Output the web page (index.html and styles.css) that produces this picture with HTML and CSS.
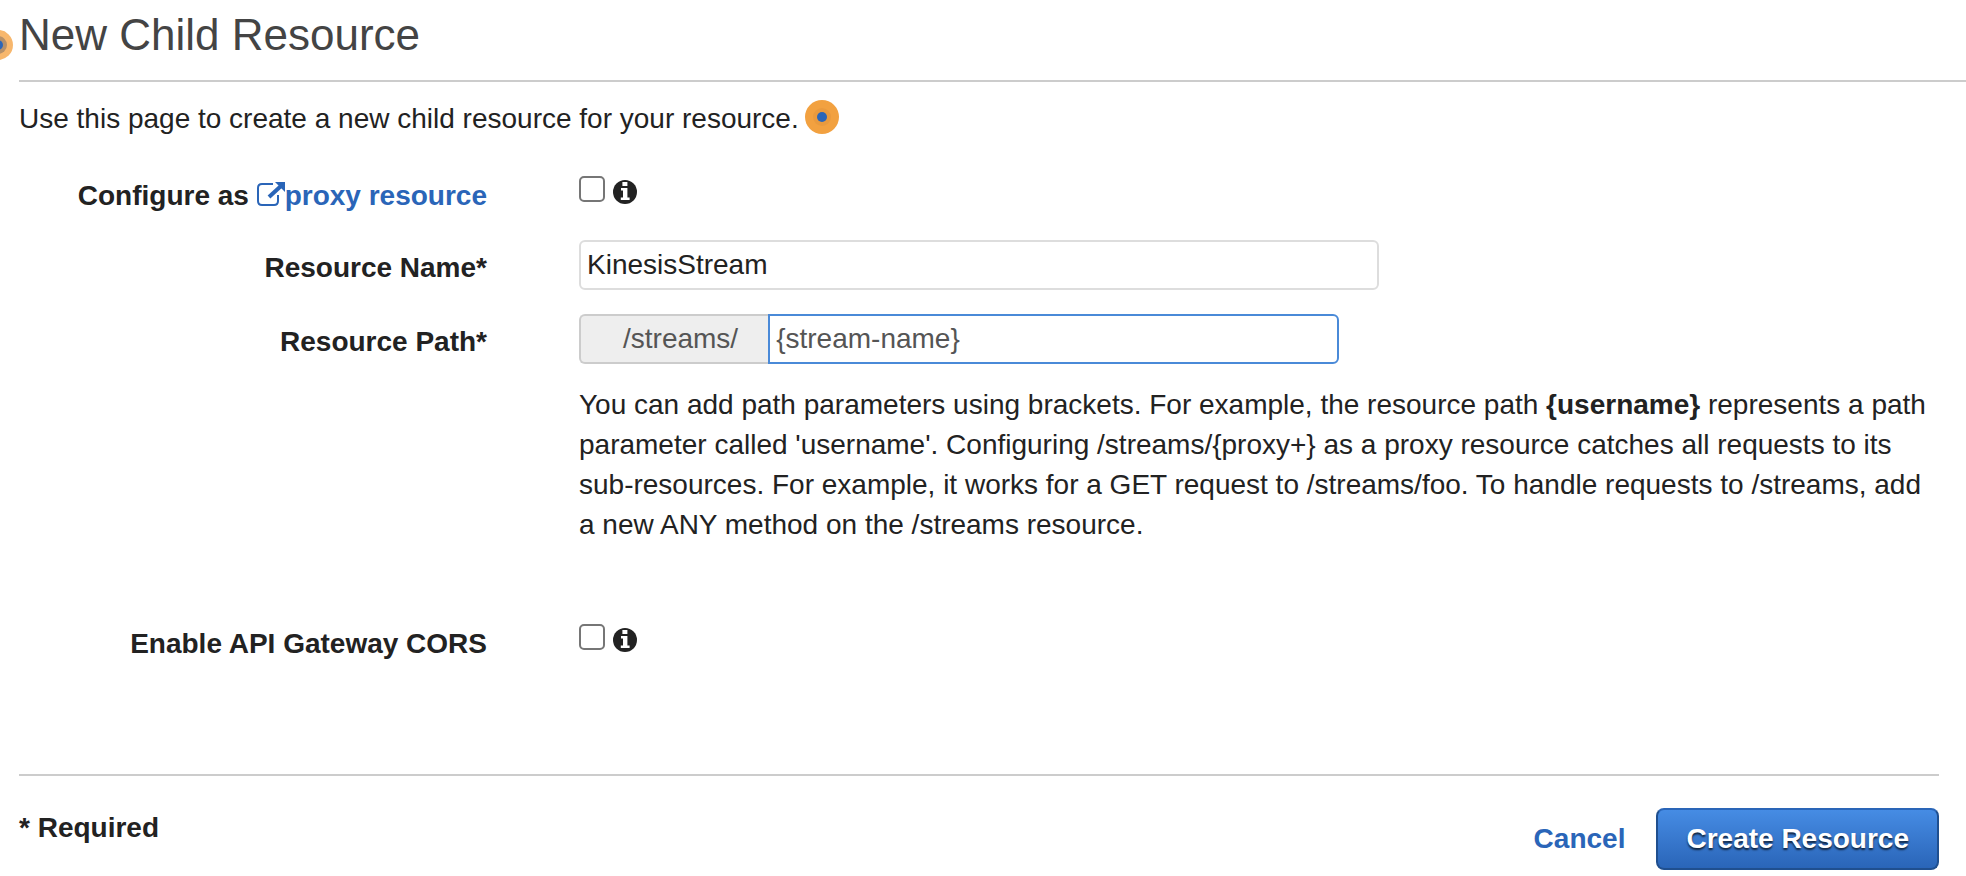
FILE: index.html
```html
<!DOCTYPE html>
<html lang="en">

<head>
    <meta charset="UTF-8">
    <meta name="viewport" content="width=device-width, initial-scale=1.0">
    <title>New Child Resource</title>
    <link rel="stylesheet" href="styles.css">
</head>

<body>
    <!-- Info icon, used next to the checkboxes -->
    <svg class="sprite" aria-hidden="true">
        <symbol id="info" viewBox="0 0 24 24">
            <circle cx="12" cy="12" r="12" fill="#222" />
            <path fill="#fff" d="M9.4 2h5v4h-5zM8 8h6.4v9.6h2.2V20H7.8v-2.4H10v-7.2H8z" />
        </symbol>
    </svg>

    <header class="page-header">
        <svg class="hotspot hotspot-edge" viewBox="0 0 34 34" aria-hidden="true">
            <circle cx="17" cy="17" r="15" fill="#f7b76d" />
            <circle cx="17" cy="17" r="9" fill="#b69069" />
            <circle cx="17" cy="17" r="5" fill="#2a65b8" />
        </svg>
        <h1>New Child Resource</h1>
    </header>

    <main class="content">
        <p class="intro">Use this page to create a new child resource for your resource.<svg class="hotspot" viewBox="0 0 34 34" aria-hidden="true">
                <circle cx="17" cy="17" r="17" fill="#f2a140" />
                <circle cx="17" cy="17" r="9" fill="#e99a3e" />
                <circle cx="17" cy="17" r="5" fill="#2a65b8" />
            </svg></p>

        <form id="resource-form">
            <div class="row">
                <div class="label">
                    <label for="proxy">Configure as</label>
                    <a href="#proxy-help"><svg class="external" viewBox="0 0 28 26" aria-hidden="true">
                            <path d="M16 3H5Q1 3 1 7V20Q1 24 5 24H17Q21 24 21 20V14" fill="none" stroke="currentColor" stroke-width="2" />
                            <path d="M12 16L24 5" fill="none" stroke="currentColor" stroke-width="4" />
                            <path d="M18 1H28V11z" fill="currentColor" />
                        </svg>proxy resource</a>
                </div>
                <div class="field check">
                    <input type="checkbox" id="proxy">
                    <button type="button" class="info" aria-label="About proxy resources"><svg><use href="#info" /></svg></button>
                </div>
            </div>

            <div class="row">
                <label class="label" for="name">Resource Name*</label>
                <div class="field">
                    <input type="text" class="text name" id="name" value="KinesisStream">
                </div>
            </div>

            <div class="row">
                <label class="label" for="path">Resource Path*</label>
                <div class="field">
                    <div class="path-group">
                        <span class="prefix">/streams/</span>
                        <input type="text" class="text path" id="path" value="{stream-name}">
                    </div>
                    <p class="help">You can add path parameters using brackets. For example, the resource path <b>{username}</b> represents a path parameter called 'username'. Configuring /streams/{proxy+} as a proxy resource catches all requests to its sub-resources. For example, it works for a GET request to /streams/foo. To handle requests to /streams, add a new ANY method on the /streams resource.</p>
                </div>
            </div>

            <div class="row cors">
                <label class="label" for="cors">Enable API Gateway CORS</label>
                <div class="field check">
                    <input type="checkbox" id="cors">
                    <button type="button" class="info" aria-label="About CORS"><svg><use href="#info" /></svg></button>
                </div>
            </div>

            <footer class="footer">
                <span class="required">* Required</span>
                <div class="actions">
                    <a href="#cancel">Cancel</a>
                    <button type="submit" class="primary">Create Resource</button>
                </div>
            </footer>
        </form>
    </main>
</body>

</html>
```

FILE: styles.css
```css
* {
    box-sizing: border-box;
}

body {
    margin: 0;
    background-color: #fff;
    font-family: "Liberation Sans", Arial, sans-serif;
    font-size: 28px;
    line-height: 40px;
    color: #222;
    overflow-x: hidden;
}

a {
    color: #2a65b8;
    font-weight: bold;
    text-decoration: none;
}

p {
    margin: 0;
}

.sprite {
    display: none;
}

.page-header {
    position: relative;
    margin-left: 19px;
    padding: 11px 0 21px;
    border-bottom: 2px solid #ccc;
}

h1 {
    margin: 0;
    font-size: 44px;
    font-weight: normal;
    line-height: 48px;
    color: #444;
}

.hotspot {
    width: 34px;
    height: 34px;
    margin-left: 6px;
    vertical-align: -6px;
}

/* Half hidden behind the left edge of the window */
.hotspot-edge {
    position: absolute;
    top: 28px;
    left: -38px;
    margin: 0;
}

.content {
    padding: 17px 27px 0 19px;
}

.intro {
    height: 40px;
    margin-bottom: 29px;
}

.row {
    display: grid;
    grid-template-columns: 468fr 1360fr;
    column-gap: 92px;
    min-height: 48px;
    margin-bottom: 24px;
}

.label {
    padding-top: 8px;
    font-weight: bold;
    text-align: right;
}

.external {
    width: 28px;
    height: 26px;
    vertical-align: -2px;
}

.check {
    display: flex;
    align-items: flex-start;
    gap: 8px;
    padding-top: 8px;
}

.check input {
    appearance: none;
    width: 26px;
    height: 26px;
    margin: 0;
    border: 2px solid #767676;
    border-radius: 5px;
    background-color: #fff;
}

.check input:checked {
    background-color: #4a8ad8;
}

.info {
    width: 24px;
    height: 24px;
    margin-top: 4px;
    padding: 0;
    border: none;
    background: none;
    cursor: pointer;
}

.info svg {
    display: block;
    width: 24px;
    height: 24px;
}

.text {
    display: block;
    width: 100%;
    height: 50px;
    padding: 0 6px;
    border: 2px solid #ddd;
    border-radius: 6px;
    font: inherit;
    color: #222;
    outline: none;
}

.name {
    max-width: 800px;
}

.path-group {
    display: flex;
    max-width: 760px;
}

.prefix {
    height: 50px;
    padding: 3px 30px 0 42px;
    border: 2px solid #ccc;
    border-right: none;
    border-radius: 6px 0 0 6px;
    background-color: #eee;
    color: #555;
}

.path {
    flex: 1;
    border-color: #4a8ad8;
    border-radius: 0 6px 6px 0;
    color: #555;
}

.help {
    margin-top: 21px;
}

.cors {
    margin-top: 71px;
    margin-bottom: 110px;
}

.footer {
    display: flex;
    justify-content: space-between;
    padding-top: 32px;
    border-top: 2px solid #ccc;
}

.required {
    font-weight: bold;
}

.actions {
    display: flex;
    align-items: center;
    gap: 31px;
}

.primary {
    height: 62px;
    padding: 0 28px;
    border: 2px solid #1f4f8f;
    border-top-color: #2a65b8;
    border-radius: 8px;
    background: linear-gradient(#468ce4, #2a65b8);
    font: inherit;
    font-weight: bold;
    color: #fff;
    text-shadow: 0 2px 2px rgba(0, 0, 0, 0.7);
    cursor: pointer;
}
```
